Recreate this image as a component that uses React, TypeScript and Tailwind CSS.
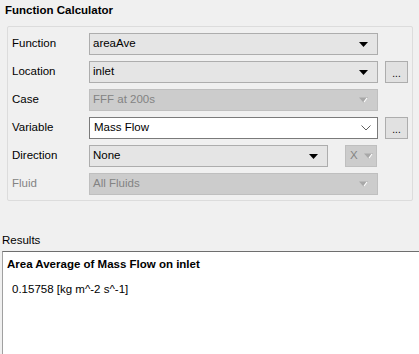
const font = { fontFamily: '"Liberation Sans", Arial, sans-serif' };

function Arrow({ disabled }: { disabled?: boolean }) {
  if (disabled) {
    return (
      <svg width="9" height="6" viewBox="0 0 9 6">
        <path d="M0 0.5 H9 L4.5 5.5 Z" fill="#a8a8a8" />
        <path d="M5 5 L8 1" stroke="#ffffff" strokeWidth="1.2" />
      </svg>
    );
  }
  return (
    <svg width="9" height="5" viewBox="0 0 9 5">
      <path d="M0 0 H9 L4.5 5 Z" fill="#000000" />
    </svg>
  );
}

function Combo({
  value,
  width,
  disabled,
}: {
  value: string;
  width: string;
  disabled?: boolean;
}) {
  return (
    <div
      className={`${width} h-[22px] flex items-center justify-between pl-[3px] pr-[9px] border ${
        disabled
          ? 'bg-[#cccccc] border-[#bfbfbf] text-[#838383]'
          : 'bg-[#e5e5e5] border-[#adadad] text-[#000000]'
      }`}
    >
      <span>{value}</span>
      <Arrow disabled={disabled} />
    </div>
  );
}

function Dots() {
  return (
    <div className="w-[23px] h-[22px] ml-[7px] border border-[#adadad] bg-[#e1e1e1] flex items-center justify-center text-[10px] leading-none pt-[3px]">
      ...
    </div>
  );
}

function Row({
  label,
  disabled,
  children,
}: {
  label: string;
  disabled?: boolean;
  children: React.ReactNode;
}) {
  return (
    <div className="flex items-center h-[22px]">
      <div className={`w-[81px] pl-[4px] ${disabled ? 'text-[#838383]' : 'text-[#000000]'}`}>
        {label}
      </div>
      {children}
    </div>
  );
}

export default function App() {
  return (
    <div className="w-[419px] h-[354px] bg-[#f0f0f0] text-[11.5px] text-black overflow-hidden flex flex-col" style={font}>
      <div className="pl-[5px] pt-[2px] h-[26px] shrink-0 font-bold text-[11.5px]">Function Calculator</div>

      <div className="ml-[7px] w-[406px] h-[175px] shrink-0 border border-[#dcdcdc] rounded-[2px] pt-[6px] flex flex-col gap-[6px]">
        <Row label="Function">
          <Combo value="areaAve" width="w-[289px]" />
        </Row>
        <Row label="Location">
          <Combo value="inlet" width="w-[289px]" />
          <Dots />
        </Row>
        <Row label="Case">
          <Combo value="FFF at 200s" width="w-[289px]" disabled />
        </Row>
        <Row label="Variable">
          <div className="w-[289px] h-[22px] flex items-center justify-between pl-[4px] pr-[6px] bg-white border border-[#7a7a7a]">
            <span>Mass Flow</span>
            <svg width="10" height="6" viewBox="0 0 10 6">
              <path d="M0.5 0.5 L5 5 L9.5 0.5" fill="none" stroke="#606060" strokeWidth="1" />
            </svg>
          </div>
          <Dots />
        </Row>
        <Row label="Direction">
          <Combo value="None" width="w-[239px]" />
          <div className="ml-[17px] w-[32px] h-[22px] flex items-center justify-between pl-[4px] pr-[3px] bg-[#cccccc] border border-[#bfbfbf] text-[#838383]">
            <span>X</span>
            <Arrow disabled />
          </div>
        </Row>
        <Row label="Fluid" disabled>
          <Combo value="All Fluids" width="w-[289px]" disabled />
        </Row>
      </div>

      <div className="pl-[2px] mt-[32px] h-[18px] shrink-0 leading-[14px]">Results</div>
      <div className="ml-[2px] flex-1 bg-white border-t border-t-[#6e6e6e] border-l border-l-[#a0a0a0] pl-[4px] pt-[4px]">
        <div className="font-bold text-[11.5px]">Area Average of Mass Flow on inlet</div>
        <div className="pl-[5px] mt-[8px]">0.15758 [kg m^-2 s^-1]</div>
      </div>
    </div>
  );
}
